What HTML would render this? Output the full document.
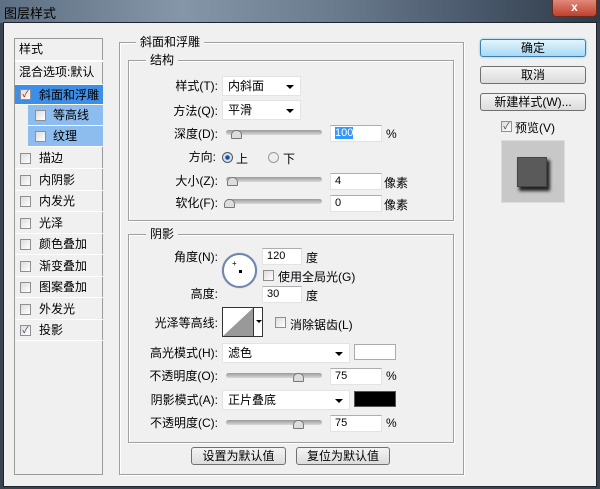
<!DOCTYPE html><html><head><meta charset="utf-8"><style>
*{margin:0;padding:0;box-sizing:border-box}
body{width:600px;height:489px;overflow:hidden;background:#3a4350;font-family:"Liberation Sans","Noto Sans CJK SC",sans-serif;font-size:12px;color:#000;position:relative}
.a{position:absolute;white-space:nowrap}
.title{left:0;top:0;width:600px;height:23px;background:linear-gradient(90deg,#5d6f82,#8596a8 30%,#6b7c8e 55%,#48586a 80%,#2f3a47)}
.body{left:3px;top:22px;width:594px;height:465px;background:#f0f0f0;border:1px solid #1e252e}
.box{position:absolute;border:1px solid #a0a0a0;box-shadow:1px 1px 0 #fff,inset 1px 1px 0 #fff}
.leg{position:absolute;background:#f0f0f0;padding:0 4px;line-height:14px}
.lbl{position:absolute;text-align:right;width:120px;line-height:14px}
.inp{position:absolute;background:#fff;border:1px solid #e3e3e3;border-top-color:#abadb3;height:17px;padding-left:4px;line-height:15px;font-size:11px}
.dd{position:absolute;background:#fff;border:1px solid #e3e3e3;height:20px;padding-left:5px;line-height:19px}
.dd:after{content:"";position:absolute;right:6px;top:8px;border:4px solid transparent;border-top:4px solid #000;border-bottom:0}
.sl{position:absolute;height:5px;width:96px;background:linear-gradient(#9a9a9a,#d8d8d8);border-radius:3px}
.th{position:absolute;width:11px;height:9px;top:0;border:1px solid #777;background:#ddd;border-radius:5px 5px 1px 1px}
.cb{position:absolute;width:11px;height:11px;border:1px solid #8f8f8f;background:linear-gradient(135deg,#ddd,#fff)}
.item{position:absolute;left:0;width:88px;height:21px;border-bottom:1px solid #fff;line-height:20px;padding-left:24px}
.item .cb{left:5px;top:5px}
.btn{position:absolute;height:18px;border:1px solid #707070;border-radius:3px;background:linear-gradient(#f4f4f4,#dcdcdc);text-align:center;line-height:16px}
</style></head><body>
<div class="a title"></div>
<div class="a" style="left:4px;top:3px;font-size:13px;color:#000">图层样式</div>
<div class="a" style="left:552px;top:0;width:45px;height:17px;background:linear-gradient(#e08a7a,#c0402c);border:1px solid #6a2a20;border-top:0;border-radius:0 0 4px 4px;color:#fff;text-align:center;font-weight:bold;line-height:14px">x</div>
<div class="a body"></div>

<!-- left panel -->
<div class="a" style="left:14px;top:38px;width:89px;height:437px;border:1px solid #9a9a9a;background:#f0f0f0">
<div class="item" style="top:0;padding-left:4px;height:23px;border-bottom:2px solid #fff">样式</div>
<div class="item" style="top:23px;padding-left:4px;height:23px">混合选项:默认</div>
<div class="item" style="top:46px;background:#3d8ee8;height:20px"><div class="cb" style="top:4px;font-size:9px;line-height:9px;color:#a00;text-align:center">✓</div>斜面和浮雕</div>
<div class="item" style="top:66px;left:13px;width:75px;background:#8dbcef;padding-left:25px"><div class="cb" style="left:7px"></div>等高线</div>
<div class="item" style="top:87px;left:13px;width:75px;background:#8dbcef;padding-left:25px"><div class="cb" style="left:7px"></div>纹理</div>
<div class="item" style="top:109px"><div class="cb"></div>描边</div>
<div class="item" style="top:131px"><div class="cb"></div>内阴影</div>
<div class="item" style="top:152px"><div class="cb"></div>内发光</div>
<div class="item" style="top:174px"><div class="cb"></div>光泽</div>
<div class="item" style="top:195px"><div class="cb"></div>颜色叠加</div>
<div class="item" style="top:217px"><div class="cb"></div>渐变叠加</div>
<div class="item" style="top:238px"><div class="cb"></div>图案叠加</div>
<div class="item" style="top:260px"><div class="cb"></div>外发光</div>
<div class="item" style="top:281px"><div class="cb" style="font-size:9px;line-height:9px;color:#336;text-align:center">✓</div>投影</div>
</div>

<!-- main group -->
<div class="box" style="left:119px;top:42px;width:345px;height:433px"></div>
<div class="leg" style="left:136px;top:35px">斜面和浮雕</div>
<div class="box" style="left:128px;top:60px;width:326px;height:161px"></div>
<div class="leg" style="left:146px;top:53px">结构</div>

<div class="lbl" style="left:98px;top:79px">样式(T):</div>
<div class="dd" style="left:222px;top:76px;width:79px">内斜面</div>
<div class="lbl" style="left:98px;top:104px">方法(Q):</div>
<div class="dd" style="left:222px;top:100px;width:79px">平滑</div>
<div class="lbl" style="left:98px;top:127px">深度(D):</div>
<div class="sl" style="left:226px;top:130px"><div class="th" style="left:5px"></div></div>
<div class="inp" style="left:330px;top:125px;width:52px"><span style="background:#3399ff;color:#fff">100</span></div>
<div class="a" style="left:386px;top:127px">%</div>
<div class="lbl" style="left:96px;top:150px">方向:</div>
<div class="a" style="left:222px;top:152px;width:11px;height:11px;border-radius:50%;border:1px solid #555;background:radial-gradient(#1a4f9c 30%,#cfe2f7 40%)"></div>
<div class="a" style="left:236px;top:150px">上</div>
<div class="a" style="left:268px;top:152px;width:11px;height:11px;border-radius:50%;border:1px solid #999;background:#eee"></div>
<div class="a" style="left:283px;top:150px">下</div>
<div class="lbl" style="left:98px;top:174px">大小(Z):</div>
<div class="sl" style="left:226px;top:177px"><div class="th" style="left:1px"></div></div>
<div class="inp" style="left:330px;top:173px;width:52px">4</div>
<div class="a" style="left:384px;top:174px">像素</div>
<div class="lbl" style="left:98px;top:196px">软化(F):</div>
<div class="sl" style="left:226px;top:199px"><div class="th" style="left:-2px"></div></div>
<div class="inp" style="left:330px;top:195px;width:52px">0</div>
<div class="a" style="left:384px;top:196px">像素</div>

<div class="box" style="left:128px;top:234px;width:326px;height:209px"></div>
<div class="leg" style="left:146px;top:227px">阴影</div>
<div class="lbl" style="left:98px;top:250px">角度(N):</div>
<div class="a" style="left:222px;top:253px;width:35px;height:35px;border-radius:50%;border:2px solid #6e86b0;background:#fff;box-shadow:0 0 1px #999"></div>
<div class="a" style="left:239px;top:270px;width:3px;height:3px;background:#000"></div>
<div class="a" style="left:232px;top:260px;font-size:8px;line-height:8px">+</div>
<div class="inp" style="left:262px;top:248px;width:40px">120</div>
<div class="a" style="left:306px;top:249px">度</div>
<div class="cb" style="left:263px;top:270px"></div>
<div class="a" style="left:278px;top:268px">使用全局光(G)</div>
<div class="lbl" style="left:98px;top:287px">高度:</div>
<div class="inp" style="left:262px;top:286px;width:40px">30</div>
<div class="a" style="left:306px;top:287px">度</div>
<div class="lbl" style="left:98px;top:316px">光泽等高线:</div>
<div class="a" style="left:222px;top:307px;width:41px;height:30px;border:1px solid #333;background:#fff">
<svg width="30" height="28" style="position:absolute;left:0;top:0"><polygon points="0,28 30,0 30,28" fill="#999"/></svg>
<div style="position:absolute;left:30px;top:0;width:1px;height:28px;background:#333"></div>
<div style="position:absolute;left:33px;top:12px;border:3px solid transparent;border-top:3px solid #000"></div></div>
<div class="cb" style="left:275px;top:317px"></div>
<div class="a" style="left:290px;top:316px">消除锯齿(L)</div>
<div class="lbl" style="left:98px;top:346px">高光模式(H):</div>
<div class="dd" style="left:222px;top:343px;width:128px">滤色</div>
<div class="a" style="left:354px;top:344px;width:42px;height:16px;border:1px solid #aaa;background:#fff"></div>
<div class="lbl" style="left:98px;top:369px">不透明度(O):</div>
<div class="sl" style="left:226px;top:373px"><div class="th" style="left:67px"></div></div>
<div class="inp" style="left:330px;top:368px;width:52px">75</div>
<div class="a" style="left:386px;top:369px">%</div>
<div class="lbl" style="left:98px;top:393px">阴影模式(A):</div>
<div class="dd" style="left:222px;top:390px;width:128px">正片叠底</div>
<div class="a" style="left:354px;top:391px;width:42px;height:16px;border:1px solid #555;background:#000"></div>
<div class="lbl" style="left:98px;top:416px">不透明度(C):</div>
<div class="sl" style="left:226px;top:420px"><div class="th" style="left:67px"></div></div>
<div class="inp" style="left:330px;top:415px;width:52px">75</div>
<div class="a" style="left:386px;top:416px">%</div>

<div class="btn" style="left:191px;top:447px;width:95px">设置为默认值</div>
<div class="btn" style="left:296px;top:447px;width:94px">复位为默认值</div>

<!-- right -->
<div class="btn" style="left:480px;top:39px;width:106px;border-color:#3c7fb1;background:linear-gradient(#e5f4fc,#a7d9f5);box-shadow:0 0 2px #5ec6f0">确定</div>
<div class="btn" style="left:480px;top:66px;width:106px">取消</div>
<div class="btn" style="left:480px;top:93px;width:106px">新建样式(W)...</div>
<div class="cb" style="left:501px;top:121px;font-size:9px;line-height:9px;color:#335;text-align:center">✓</div>
<div class="a" style="left:515px;top:119px">预览(V)</div>
<div class="a" style="left:501px;top:140px;width:64px;height:63px;border:1px solid #ddd;background:#c8c8c8"></div>
<div class="a" style="left:519px;top:160px;width:31px;height:31px;background:#222;filter:blur(1.5px)"></div>
<div class="a" style="left:517px;top:157px;width:30px;height:30px;background:#5a5a5a;border:1px solid #444"></div>
</body></html>
